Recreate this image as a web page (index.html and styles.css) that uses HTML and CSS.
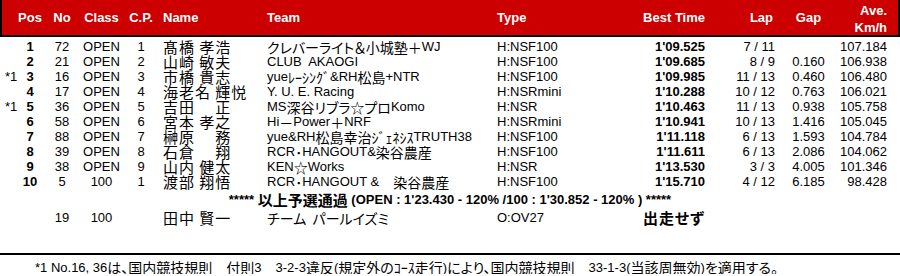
FILE: index.html
```html
<!DOCTYPE html>
<html lang="ja">
<head>
<meta charset="utf-8">
<title>Qualifying results</title>
<link rel="stylesheet" href="styles.css">
</head>
<body>
<div class="sheet">
  <div class="grid head">
    <div></div>
    <div class="c">Pos</div>
    <div class="c">No</div>
    <div class="c">Class</div>
    <div class="c">C.P.</div>
    <div class="l">Name</div>
    <div class="l">Team</div>
    <div class="l">Type</div>
    <div class="r">Best Time</div>
    <div class="r hlap">Lap</div>
    <div class="c">Gap</div>
    <div class="r ave have">Ave.<br>Km/h</div>
  </div>

  <div class="body">
    <div class="grid row">
      <div class="mark"></div><div class="c b">1</div><div class="c">72</div><div class="c">OPEN</div><div class="c">1</div>
      <div class="l nm"><span class="j">髙橋 孝浩</span></div>
      <div class="l"><span class="j">クレバーライト＆小城塾＋</span>WJ</div>
      <div class="l">H:NSF100</div><div class="r b">1'09.525</div><div class="r lap">7 / 11</div><div class="c"></div><div class="r ave">107.184</div>
    </div>
    <div class="grid row">
      <div class="mark"></div><div class="c b">2</div><div class="c">21</div><div class="c">OPEN</div><div class="c">2</div>
      <div class="l nm"><span class="j">山崎 敏夫</span></div>
      <div class="l">CLUB&nbsp; AKAOGI</div>
      <div class="l">H:NSF100</div><div class="r b">1'09.685</div><div class="r lap">8 / 9</div><div class="c">0.160</div><div class="r ave">106.938</div>
    </div>
    <div class="grid row">
      <div class="mark">*1</div><div class="c b">3</div><div class="c">16</div><div class="c">OPEN</div><div class="c">3</div>
      <div class="l nm"><span class="j">市橋 貴志</span></div>
      <div class="l">yue<span class="j">ﾚｰｼﾝｸﾞ</span>&amp;RH<span class="j">松島</span>+NTR</div>
      <div class="l">H:NSF100</div><div class="r b">1'09.985</div><div class="r lap">11 / 13</div><div class="c">0.460</div><div class="r ave">106.480</div>
    </div>
    <div class="grid row">
      <div class="mark"></div><div class="c b">4</div><div class="c">17</div><div class="c">OPEN</div><div class="c">4</div>
      <div class="l nm"><span class="j">海老名 輝悦</span></div>
      <div class="l">Y. U. E. Racing</div>
      <div class="l">H:NSRmini</div><div class="r b">1'10.288</div><div class="r lap">10 / 12</div><div class="c">0.763</div><div class="r ave">106.021</div>
    </div>
    <div class="grid row">
      <div class="mark">*1</div><div class="c b">5</div><div class="c">36</div><div class="c">OPEN</div><div class="c">5</div>
      <div class="l nm"><span class="j">吉田　 正</span></div>
      <div class="l">MS<span class="j">深谷リブラ☆プロ</span>Komo</div>
      <div class="l">H:NSR</div><div class="r b">1'10.463</div><div class="r lap">11 / 13</div><div class="c">0.938</div><div class="r ave">105.758</div>
    </div>
    <div class="grid row">
      <div class="mark"></div><div class="c b">6</div><div class="c">58</div><div class="c">OPEN</div><div class="c">6</div>
      <div class="l nm"><span class="j">宮本 孝之</span></div>
      <div class="l">Hi<span class="j">－</span>Power<span class="j">＋</span>NRF</div>
      <div class="l">H:NSRmini</div><div class="r b">1'10.941</div><div class="r lap">10 / 13</div><div class="c">1.416</div><div class="r ave">105.045</div>
    </div>
    <div class="grid row">
      <div class="mark"></div><div class="c b">7</div><div class="c">88</div><div class="c">OPEN</div><div class="c">7</div>
      <div class="l nm"><span class="j">榊原　 務</span></div>
      <div class="l">yue&amp;RH<span class="j">松島幸治ｼﾞｪﾈｼｽ</span>TRUTH38</div>
      <div class="l">H:NSF100</div><div class="r b">1'11.118</div><div class="r lap">6 / 13</div><div class="c">1.593</div><div class="r ave">104.784</div>
    </div>
    <div class="grid row">
      <div class="mark"></div><div class="c b">8</div><div class="c">39</div><div class="c">OPEN</div><div class="c">8</div>
      <div class="l nm"><span class="j">石倉　 翔</span></div>
      <div class="l">RCR<span class="j">･</span>HANGOUT&amp;<span class="j">染谷農産</span></div>
      <div class="l">H:NSF100</div><div class="r b">1'11.611</div><div class="r lap">6 / 13</div><div class="c">2.086</div><div class="r ave">104.062</div>
    </div>
    <div class="grid row">
      <div class="mark"></div><div class="c b">9</div><div class="c">38</div><div class="c">OPEN</div><div class="c">9</div>
      <div class="l nm"><span class="j">山内 健太</span></div>
      <div class="l">KEN<span class="j">☆</span>Works</div>
      <div class="l">H:NSR</div><div class="r b">1'13.530</div><div class="r lap">3 / 3</div><div class="c">4.005</div><div class="r ave">101.346</div>
    </div>
    <div class="grid row">
      <div class="mark"></div><div class="c b">10</div><div class="c">5</div><div class="c">100</div><div class="c">1</div>
      <div class="l nm"><span class="j">渡部 翔悟</span></div>
      <div class="l">RCR<span class="j">･</span>HANGOUT &amp;<span class="j">　染谷農産</span></div>
      <div class="l">H:NSF100</div><div class="r b">1'15.710</div><div class="r lap">4 / 12</div><div class="c">6.185</div><div class="r ave">98.428</div>
    </div>
  </div>

  <div class="qual">***** <span class="j">以上予選通過</span> (OPEN : 1'23.430 - 120% /100 : 1'30.852 - 120% ) *****</div>

  <div class="grid row">
    <div class="mark"></div><div class="c b"></div><div class="c">19</div><div class="c">100</div><div class="c"></div>
    <div class="l nm"><span class="j">田中 賢一</span></div>
    <div class="l"><span class="j">チーム&nbsp; パールイズミ</span></div>
    <div class="l">O:OV27</div><div class="r b dns"><span class="j">出走せず</span></div><div class="r lap"></div><div class="c"></div><div class="r ave"></div>
  </div>

  <div class="note">*1 No.16, 36<span class="j">は、国内競技規則　付則</span>3<span class="j">　</span>3-2-3<span class="j">違反</span>(<span class="j">規定外のｺｰｽ走行</span>)<span class="j">により、国内競技規則　</span>33-1-3(<span class="j">当該周無効</span>)<span class="j">を適用する。</span></div>
</div>
</body>
</html>
```

FILE: styles.css
```css
* {
  box-sizing: border-box;
  margin: 0;
  padding: 0;
}

html,
body {
  overflow: hidden;
}

body {
  margin: 0;
  background: #fff;
  color: #000;
  font-family: "Liberation Sans", Arial, "Noto Sans CJK JP", sans-serif;
  font-size: 13px;
  font-feature-settings: "palt";
}

.sheet {
  width: 900px;
}

.grid {
  display: grid;
  grid-template-columns: 16px 24px 40px 39px 40px 104px 230px 105px 105px 72px 63px 58px;
}

.head {
  height: 37px;
  background: #cc0000;
  border: 2px solid #000;
  border-top: 0;
  color: #fff;
  font-weight: bold;
  align-items: center;
  line-height: 15px;
}

.have {
  align-self: start;
  padding-top: 1.5px;
  line-height: 17px;
}

.body {
  margin-top: 2px;
}

.row {
  height: 15px;
  line-height: 15px;
  padding: 0 2px;
  white-space: nowrap;
}

.c { text-align: center; }
.r { text-align: right; }
.l { padding-left: 2px; }
.b { font-weight: bold; }
.mark { padding-left: 3px; }
.lap { padding-right: 2px; }
.hlap { padding-right: 4px; }
.ave { padding-right: 11px; }

.j {
  font-family: "Noto Sans CJK JP", sans-serif;
  font-size: 14px;
  line-height: 10px;
  vertical-align: -2px;
}

.nm .j {
  font-size: 15px;
  letter-spacing: 1px;
}

.dns .j {
  font-size: 15px;
  letter-spacing: 1px;
}

.qual {
  height: 21px;
  padding: 3px 0;
  line-height: 15px;
  text-align: center;
  font-weight: bold;
  white-space: nowrap;
}

.qual .j {
  font-size: 15px;
}

.note {
  height: 21px;
  margin-top: 28px;
  border-top: 2px solid #000;
  padding: 6px 0 0 35px;
  line-height: 14px;
  white-space: nowrap;
}

.note .j {
  font-size: 14px;
  vertical-align: -1px;
}
```
